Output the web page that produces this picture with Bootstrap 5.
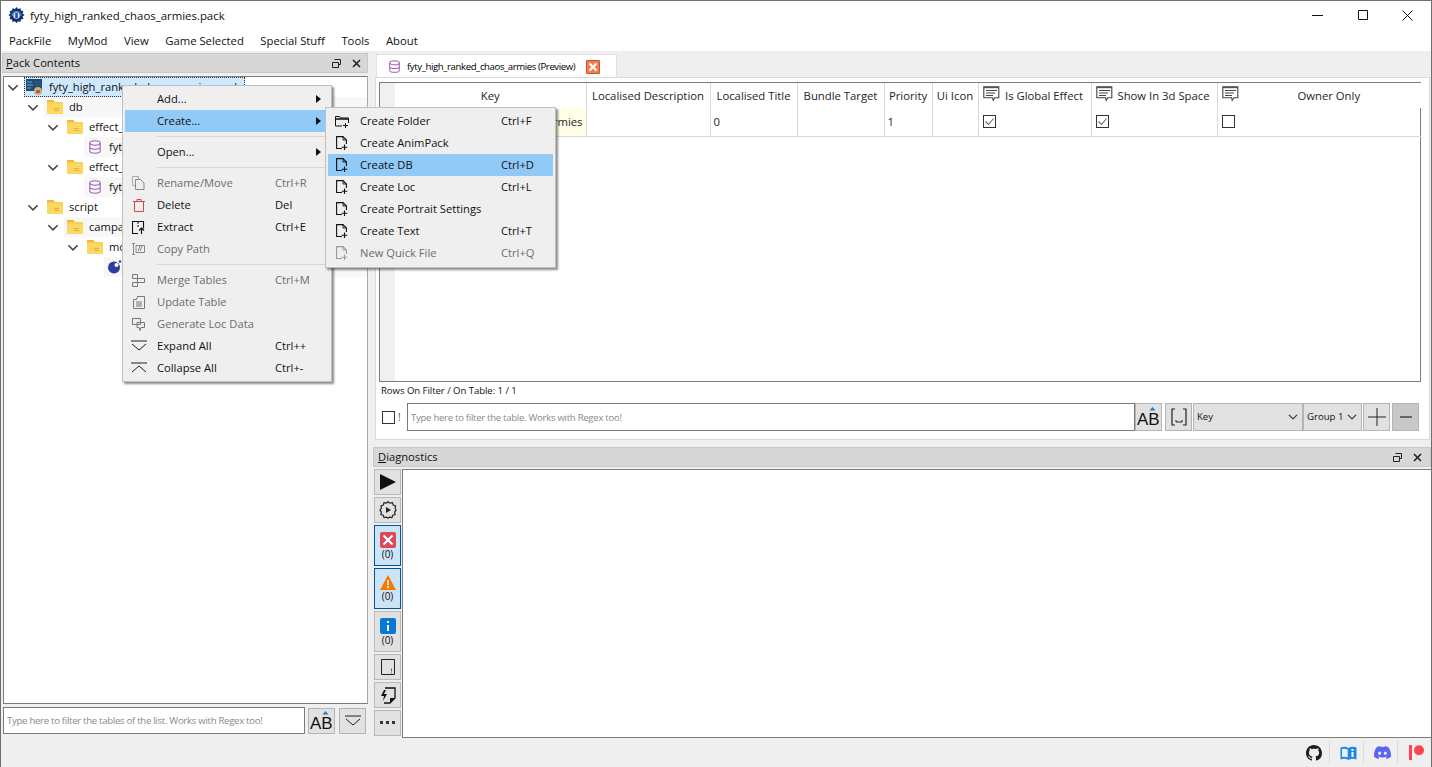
<!DOCTYPE html>
<html lang="en">
<head>
<meta charset="UTF-8" />
<title>fyty_high_ranked_chaos_armies.pack</title>
<link href="https://cdn.jsdelivr.net/npm/bootstrap@5.3.0/dist/css/bootstrap.min.css" rel="stylesheet" />
<style>
  html, body { height: 100%; }
  body { font: 11.2px/16px "Open Sans", "Noto Sans", sans-serif; color: #111; background: #efefef; border: 1px solid #6f6f6f; border-bottom: 0; overflow: hidden; position: relative; }
  svg { display: block; flex: none; }
  .titlebar { height: 29px; background: #fff; padding-left: 7px; gap: 5px; font-size: 11.4px; }
  .titlebar .name { white-space: nowrap; }
  .win-btn { width: 45px; height: 29px; justify-content: center; }
  .win-btns { margin-left: auto; padding-right: 1px; }
  .menubar { height: 21px; background: #fff; padding: 0 0 0 8px; gap: 16.500px; flex-wrap: nowrap; justify-content: flex-start; font-size: 11.3px; }
  .menubar a { color: #111; text-decoration: none; }

  .workspace { flex: 1 1 0; min-height: 0; }
  .left-pane { width: 372px; padding: 2px 5px 4px 2px; }
  .right-pane { flex: 1 1 0; min-width: 0; padding: 3px 0 0 0; }
  .dock-title { height: 20px; background: #d7d7d7; border: 1px solid #c8c8c8; padding: 0 6px 0 3px; }
  .left-pane .dock-title { margin-left: -1px; }
  .diag .dock-title { padding: 0 8px 0 4px; }
  .dock-tools { margin-left: auto; gap: 11px; }

  .tree { flex: 1 1 0; margin-top: 3px; background: #fff; border: 1px solid #7a7a7a; border-right-color: #a8a8a8; min-height: 0; overflow: hidden; }
  .tree-row { height: 20px; border: 0; padding: 0; background: none; gap: 4px; color: #111; }
  .tree-row .body { flex: 1 1 0; height: 20px; gap: 6px; padding-left: 3px; white-space: nowrap; overflow: hidden; }
  .tree-row:nth-child(even) .body { background: #f7f7f7; }
  .lvl-0 { padding-left: 2px; } .lvl-1 { padding-left: 22px; } .lvl-2 { padding-left: 42px; }
  .lvl-3 { padding-left: 62px; } .lvl-4 { padding-left: 82px; }
  .tree-row .chev, .tree-row .chev-none { width: 14px; }
  .tree-row.selected .body { flex: 0 0 221px; padding-left: 2px; gap: 7px; background: #cde8ff; outline: 1px dotted #333; outline-offset: -1px; }

  .filter-row { margin-top: 3px; height: 27px; align-items: center; margin-right: 2px; }
  .form-control.qt-input { height: 27px; border-radius: 0; border: 1px solid #7a7a7a; padding: 0 3px; font-size: 9.6px; letter-spacing: -.29px; min-height: 0; background: #fff; color: #111; box-shadow: none; }
  .qt-input::placeholder { color: #8a8a8a; opacity: 1; }
  .btn.qt-btn { width: 27px; height: 26px; padding: 0; border: 1px solid #b4b4b4; border-radius: 0; background: #e1e1e1; display: flex; align-items: center; justify-content: center; flex: none; }
  .filter-row .btn.qt-btn { margin-left: 3px; }
  .filter-row .btn.qt-btn + .btn.qt-btn { margin-left: 4px; }

  .tabs { height: 23px; border: 0; padding-left: 3px; flex-wrap: nowrap; }
  .tabs .nav-link { height: 24px; width: 241px; padding: 0 0 0 11px; gap: 6px; display: flex; align-items: center; color: #111; background: #fff; border: 1px solid #d9d9d9; border-bottom: 0; border-radius: 0; font-size: 9.6px; letter-spacing: -.4px; white-space: nowrap; }
  .tabs .tab-close { margin-left: 5px; }
  .tab-panel { height: 363px; margin-left: 2px; margin-right: 1px; background: #fff; border: 1px solid #d9d9d9; padding: 4px 8px 0 3px; }
  .grid-box { height: 300px; border: 1px solid #7d7d7d; position: relative; background: linear-gradient(90deg, #f0f0f0 15px, #fff 15px); }
  .grid { table-layout: fixed; width: 1026px; margin: 0 0 0 15px; border-collapse: collapse; --bs-table-bg: transparent; font-size: 11.3px; }
  .grid th, .grid td { border: 0; border-right: 1px solid #d9d9d9; padding: 0 3px; font-weight: 400; white-space: nowrap; overflow: hidden; vertical-align: middle; box-shadow: none; }
  .grid th { height: 25px; text-align: center; background: #fff; }
  .grid td { height: 28px; border-bottom: 1px solid #d9d9d9; }
  .grid td.key { text-align: right; background: #fffde6; }
  .grid th.has-note { position: relative; padding-left: 22px; }
  .grid th.has-note svg { position: absolute; left: 4px; top: 3px; }
  .grid th:last-child, .grid td:last-child { border-right: 0; }
  .c-key { width: 191px; } .c-desc { width: 124px; } .c-title { width: 87px; } .c-bundle { width: 87px; }
  .c-prio { width: 48px; } .c-icon { width: 46px; } .c-global { width: 113px; } .c-3d { width: 126px; } .c-owner { width: 204px; }
  .check { width: 13px; height: 13px; border: 1px solid #333; background: #fff; margin-left: 1px; }
  .status-line { height: 21px; font-size: 9.6px; letter-spacing: -.06px; padding: 1px 0 0 2px; align-items: flex-start; }
  .table-filter { height: 28px; gap: 0; align-items: center; padding-left: 3px; }
  .table-filter .check { margin: 0 3px 0 0; }
  .table-filter .bang { width: 9px; color: #555; font-size: 10px; }
  .table-filter .qt-input { flex: 1 1 0; width: auto; height: 28px; }
  .table-filter .btn.qt-btn { height: 28px; }
  .table-filter .btn.brackets { margin-left: 3px; margin-right: 1px; }
  .form-select.qt-select { height: 28px; border-radius: 0; border: 1px solid #b4b4b4; background-color: #e1e1e1; font-size: 9.6px; padding: 0 14px 0 3px; background-position: right 4px center; background-size: 10px; flex: none; color: #111; box-shadow: none; }
  .sel-key { width: 110px; } .sel-group { width: 59px; }
  .btn.qt-btn.gap-left { margin-left: 1px; width: 27px; }
  .btn.qt-btn.minus { margin-left: 2px; background: #c8c8c8; margin-right: 2px; }

  .diag { flex: 1 1 0; min-height: 0; margin-top: 7px; }
  .diag-body { flex: 1 1 0; min-height: 0; padding-top: 2px; }
  .diag-tools { width: 29px; gap: 2px; padding-left: 1px; }
  .btn.tool { width: 27px; height: 26px; padding: 0; border: 1px solid #b9b9b9; border-radius: 0; background: #e1e1e1; display: flex; flex-direction: column; align-items: center; justify-content: center; color: #111; font-size: 10px; line-height: 11px; }
  .btn.tool.tall { height: 41px; gap: 1px; }
  .btn.tool.on { background: #cce4f7; border-color: #005499; }
  .diag-list { flex: 1 1 0; background: #fff; border: 1px solid #7d7d7d; border-right: 0; }

  .statusbar { height: 29px; background: #efefef; justify-content: flex-end; }
  .statusbar .st { width: 34px; height: 23px; padding-left: 4px; display: flex; align-items: center; justify-content: center; border-left: 1px solid #dcdcdc; }
  .statusbar .st:first-child { border-left: 0; }

  .ctx.dropdown-menu { display: block; position: absolute; margin: 0; padding: 2px; min-width: 0; border: 1px solid #c0c0c0; border-radius: 0; background: #efefef; box-shadow: 2px 2px 2px rgba(0,0,0,.45); font-size: 11.2px; z-index: 10; }
  .ctx-main { left: 121px; top: 84px; width: 210px; height: 297px; }
  .ctx-sub { left: 324px; top: 106px; width: 231px; height: 161px; padding-right: 3px; z-index: 11; }
  .ctx .dropdown-item { height: 22px; padding: 0; display: flex; align-items: center; color: #111; position: relative; background: none; white-space: nowrap; font-size: 11.2px; }
  .ctx .dropdown-item.active { background: #91c9f7; color: #111; }
  .ctx .dropdown-item.disabled { color: #6d6d6d; }
  .ctx .mi { width: 32px; display: flex; justify-content: center; flex: none; padding-right: 5px; }
  .ctx .label { flex: 0 0 118px; }
  .ctx-sub .label { flex: 0 0 141px; }
  .ctx .caret { position: absolute; right: 8px; top: 7px; width: 0; height: 0; border-left: 5px solid #111; border-top: 4px solid transparent; border-bottom: 4px solid transparent; }
  .ctx .dropdown-divider { margin: 4px 0 4px 32px; opacity: 1; border-top: 1px solid #d6d6d6; }
</style>
</head>
<body class="d-flex flex-column">
<svg width="0" height="0" class="position-absolute">
  <symbol id="folder" viewBox="0 0 16 16"><path d="M0 1h6l2 2h8v12H0z" fill="#f8d258"/><path d="M0 1h6l2 2H0z" fill="#f2b632"/><path d="M0 5h16v10H0z" fill="#fbd862"/><path d="M7 9h5v1H7zM7 11h5v1H7z" fill="#eaa93c"/></symbol>
  <symbol id="db" viewBox="0 0 14 14"><g fill="none" stroke="#a45fb8" stroke-width="1.1"><ellipse cx="7" cy="3" rx="5.2" ry="2.2"/><path d="M1.800 3v8c0 1.200 2.300 2.200 5.200 2.200s5.200-1 5.200-2.200V3M1.800 7c0 1.200 2.300 2.200 5.200 2.200s5.200-1 5.200-2.200"/></g></symbol>
  <symbol id="chev" viewBox="0 0 10 6"><path d="M1 1l4 4 4-4" fill="none" stroke="#444" stroke-width="1.3"/></symbol>
  <symbol id="docplus" viewBox="0 0 12 14"><path d="M6 12.500H.6V.6h6.400L10.400 4v4" fill="none" stroke="currentColor" stroke-width="1.100"/><path d="M7 .6V4h3.400" fill="none" stroke="currentColor" stroke-width=".9"/><path d="M8.500 8.500v5.500M5.800 11.200h5.500" stroke="currentColor" stroke-width="1.100"/></symbol>
  <symbol id="note" viewBox="0 0 17 16"><path d="M.8.800h15v11h-4l-1.600 2.500-.6-2.500H.8z" fill="#fff" stroke="#444" stroke-width="1.100"/><path d="M.8.800h15v1.400H.8z" fill="#555"/><path d="M3 4.500h11M3 7h9M3 9.500h7" stroke="#444"/></symbol>
  <symbol id="ab" viewBox="0 0 24 20"><path d="M15.500 0l3 3.500h-6z" fill="#1a7fd6"/><text x="0" y="18" font-family="Liberation Sans, sans-serif" font-size="17" fill="#111">AB</text></symbol>
  <symbol id="expand" viewBox="0 0 16 12"><path d="M0 1h16" stroke="#222"/><path d="M1 4l7 6 7-6" fill="none" stroke="#222"/></symbol>
  <symbol id="collapse" viewBox="0 0 16 12"><path d="M0 1h16" stroke="#222"/><path d="M1 10l7-6 7 6" fill="none" stroke="#222"/></symbol>
</svg>

<header class="titlebar d-flex align-items-center">
  <svg width="17" height="17" viewBox="0 0 17 17"><path d="M8.500 0l1.500 2 2.400-.8.600 2.400 2.400.6-.8 2.400 2 1.500-2 1.500.8 2.400-2.400.6-.6 2.400-2.400-.8-1.500 2-1.500-2-2.400.8-.6-2.400-2.400-.6.8-2.400-2-1.500 2-1.500-.8-2.400 2.400-.6.6-2.400 2.400.8z" fill="#16306f"/><path d="M4 9a4.500 4.500 0 019 0" fill="none" stroke="#4d8fd6" stroke-width="1.200"/><circle cx="8.500" cy="8.500" r="3.200" fill="#e6edf7"/><path d="M7.200 6h2.600v5H7.200z" fill="#1d4f9f"/></svg>
  <span class="name">fyty_high_ranked_chaos_armies.pack</span>
  <div class="win-btns d-flex">
    <div class="win-btn d-flex align-items-center"><svg width="11" height="11" viewBox="0 0 11 11"><path d="M0 5.500h11" stroke="#111"/></svg></div>
    <div class="win-btn d-flex align-items-center"><svg width="11" height="11" viewBox="0 0 11 11"><path d="M1.500.500h9v9h-9z" fill="none" stroke="#111"/></svg></div>
    <div class="win-btn d-flex align-items-center"><svg width="11" height="11" viewBox="0 0 11 11"><path d="M.5.500l10 10M10.500.500l-10 10" stroke="#111"/></svg></div>
  </div>
</header>

<nav class="navbar menubar">
  <a href="#">PackFile</a><a href="#">MyMod</a><a href="#">View</a><a href="#">Game Selected</a><a href="#">Special Stuff</a><a href="#">Tools</a><a href="#">About</a>
</nav>

<main class="workspace d-flex">
  <section class="left-pane d-flex flex-column">
    <div class="dock-title d-flex align-items-center">
      <span><u>P</u>ack Contents</span>
      <div class="dock-tools d-flex align-items-center">
        <svg width="9" height="9" viewBox="0 0 9 9"><path d="M2.500.5h6v5h-2M.5 3.500h6v5h-6z" fill="none" stroke="#222"/></svg>
        <svg width="9" height="9" viewBox="0 0 9 9"><path d="M1 1l7 7M8 1L1 8" stroke="#222" stroke-width="1.600"/></svg>
      </div>
    </div>
    <div class="tree list-group list-group-flush">
      <div class="list-group-item tree-row selected lvl-0 d-flex align-items-center">
        <svg class="chev" width="14" height="7"><use href="#chev"/></svg>
        <div class="body d-flex align-items-center">
          <svg width="16" height="16" viewBox="0 0 16 16"><rect y="0" width="16" height="12" fill="#1f4a72"/><path d="M1 3h5M1 6h6M1 9h4" stroke="#6fa8d8"/><path d="M8 3h7M9 6h6" stroke="#35658f"/><circle cx="12" cy="12" r="4" fill="#c9b46a"/><rect x="10.200" y="11" width="3.600" height="3" fill="#b5505e"/></svg>
          <span>fyty_high_ranked_chaos_armies.pack</span>
        </div>
      </div>
      <div class="list-group-item tree-row lvl-1 d-flex align-items-center"><svg class="chev" width="14" height="7"><use href="#chev"/></svg><div class="body d-flex align-items-center"><svg width="16" height="16"><use href="#folder"/></svg><span>db</span></div></div>
      <div class="list-group-item tree-row lvl-2 d-flex align-items-center"><svg class="chev" width="14" height="7"><use href="#chev"/></svg><div class="body d-flex align-items-center"><svg width="16" height="16"><use href="#folder"/></svg><span>effect_bundles_tables</span></div></div>
      <div class="list-group-item tree-row lvl-3 d-flex align-items-center"><span class="chev-none"></span><div class="body d-flex align-items-center"><svg width="16" height="14" viewBox="-1 0 16 14"><use href="#db" width="14" height="14"/></svg><span>fyty_high_ranked_chaos_armies</span></div></div>
      <div class="list-group-item tree-row lvl-2 d-flex align-items-center"><svg class="chev" width="14" height="7"><use href="#chev"/></svg><div class="body d-flex align-items-center"><svg width="16" height="16"><use href="#folder"/></svg><span>effect_bundles_to_tables</span></div></div>
      <div class="list-group-item tree-row lvl-3 d-flex align-items-center"><span class="chev-none"></span><div class="body d-flex align-items-center"><svg width="16" height="14" viewBox="-1 0 16 14"><use href="#db" width="14" height="14"/></svg><span>fyty_high_ranked_chaos_armies</span></div></div>
      <div class="list-group-item tree-row lvl-1 d-flex align-items-center"><svg class="chev" width="14" height="7"><use href="#chev"/></svg><div class="body d-flex align-items-center"><svg width="16" height="16"><use href="#folder"/></svg><span>script</span></div></div>
      <div class="list-group-item tree-row lvl-2 d-flex align-items-center"><svg class="chev" width="14" height="7"><use href="#chev"/></svg><div class="body d-flex align-items-center"><svg width="16" height="16"><use href="#folder"/></svg><span>campaign</span></div></div>
      <div class="list-group-item tree-row lvl-3 d-flex align-items-center"><svg class="chev" width="14" height="7"><use href="#chev"/></svg><div class="body d-flex align-items-center"><svg width="16" height="16"><use href="#folder"/></svg><span>mod</span></div></div>
      <div class="list-group-item tree-row lvl-4 d-flex align-items-center"><span class="chev-none"></span><div class="body d-flex align-items-center"><svg width="16" height="14" viewBox="0 0 16 14"><circle cx="7" cy="7.500" r="6" fill="#2a3f9e"/><circle cx="9.500" cy="5" r="2" fill="#fff"/><circle cx="13" cy="1.500" r="1.200" fill="#2a3f9e"/></svg><span>fyty_high_ranked_chaos_armies.lua</span></div></div>
    </div>
    <div class="filter-row d-flex">
      <input class="form-control qt-input" placeholder="Type here to filter the tables of the list. Works with Regex too!" />
      <button class="btn qt-btn"><svg width="24" height="20"><use href="#ab"/></svg></button>
      <button class="btn qt-btn"><svg width="16" height="12"><use href="#expand"/></svg></button>
    </div>
  </section>

  <section class="right-pane d-flex flex-column">
    <ul class="nav nav-tabs tabs">
      <li class="nav-item">
        <a class="nav-link active" href="#">
          <svg width="13" height="13"><use href="#db"/></svg>
          <span>fyty_high_ranked_chaos_armies (Preview)</span>
          <svg class="tab-close" width="14" height="14" viewBox="0 0 14 14"><rect width="14" height="14" rx="1" fill="#ef7f52"/><rect x=".5" y=".5" width="13" height="13" rx="1" fill="none" stroke="#c9542a"/><path d="M3.500 3.500l7 7M10.500 3.500l-7 7" stroke="#fff" stroke-width="2"/></svg>
        </a>
      </li>
    </ul>
    <div class="tab-panel">
      <div class="grid-box">
        <table class="table grid mb-0">
          <colgroup><col class="c-key"><col class="c-desc"><col class="c-title"><col class="c-bundle"><col class="c-prio"><col class="c-icon"><col class="c-global"><col class="c-3d"><col class="c-owner"></colgroup>
          <thead>
            <tr>
              <th>Key</th><th>Localised Description</th><th>Localised Title</th><th>Bundle Target</th><th>Priority</th><th>Ui Icon</th>
              <th class="has-note"><svg width="17" height="16"><use href="#note"/></svg>Is Global Effect</th>
              <th class="has-note"><svg width="17" height="16"><use href="#note"/></svg>Show In 3d Space</th>
              <th class="has-note"><svg width="17" height="16"><use href="#note"/></svg>Owner Only</th>
            </tr>
          </thead>
          <tbody>
            <tr>
              <td class="key">fyty_high_ranked_chaos_armies</td><td></td><td>0</td><td></td><td>1</td><td></td>
              <td><div class="check"><svg width="11" height="11" viewBox="0 0 11 11"><path d="M1.500 5.500l3 3 5-6" fill="none" stroke="#666" stroke-width="1.100"/></svg></div></td>
              <td><div class="check"><svg width="11" height="11" viewBox="0 0 11 11"><path d="M1.500 5.500l3 3 5-6" fill="none" stroke="#666" stroke-width="1.100"/></svg></div></td>
              <td><div class="check"></div></td>
            </tr>
          </tbody>
        </table>
      </div>
      <div class="status-line d-flex">Rows On Filter / On Table: 1 / 1</div>
      <div class="table-filter d-flex">
        <div class="check"></div><span class="bang">!</span>
        <input class="form-control qt-input" placeholder="Type here to filter the table. Works with Regex too!" />
        <button class="btn qt-btn"><svg width="24" height="20"><use href="#ab"/></svg></button>
        <button class="btn qt-btn brackets"><svg width="20" height="18" viewBox="0 0 20 18"><path d="M6 1H3v16h3M14 1h3v16h-3" fill="none" stroke="#222" stroke-width="1.200"/><path d="M7 12v2h6v-2" fill="none" stroke="#222"/></svg></button>
        <select class="form-select qt-select sel-key"><option>Key</option></select>
        <select class="form-select qt-select sel-group"><option>Group 1</option></select>
        <button class="btn qt-btn gap-left"><svg width="18" height="18" viewBox="0 0 18 18"><path d="M9 0v18M0 9h18" stroke="#222"/></svg></button>
        <button class="btn qt-btn minus"><svg width="12" height="2" viewBox="0 0 12 2"><path d="M0 1h12" stroke="#666" stroke-width="2"/></svg></button>
      </div>
    </div>

    <div class="diag d-flex flex-column">
      <div class="dock-title d-flex align-items-center">
        <span><u>D</u>iagnostics</span>
        <div class="dock-tools d-flex align-items-center">
          <svg width="9" height="9" viewBox="0 0 9 9"><path d="M2.500.5h6v5h-2M.5 3.500h6v5h-6z" fill="none" stroke="#222"/></svg>
          <svg width="9" height="9" viewBox="0 0 9 9"><path d="M1 1l7 7M8 1L1 8" stroke="#222" stroke-width="1.600"/></svg>
        </div>
      </div>
      <div class="diag-body d-flex">
        <div class="diag-tools d-flex flex-column">
          <button class="btn tool"><svg width="16" height="16" viewBox="0 0 16 16"><path d="M0 0l16 8-16 8z" fill="#111"/></svg></button>
          <button class="btn tool"><svg width="18" height="18" viewBox="0 0 18 18"><path d="M9 1l2 1.500 2.500-.5.700 2.400 2.400.7-.5 2.400L17 9.500l-1.400 2 .5 2.400-2.400.6-.7 2.400-2.500-.5L9 17.500l-1.500-1.100-2.500.5-.7-2.400-2.400-.6.500-2.400L1 9.500l1.400-2-.5-2.400 2.400-.7.700-2.400 2.500.5z" transform="translate(0 -.3)" fill="none" stroke="#222" stroke-width="1.200"/><path d="M7 6l5 3-5 3z" fill="#222"/></svg></button>
          <button class="btn tool tall on"><svg width="16" height="16" viewBox="0 0 16 16"><rect width="16" height="16" rx="2" fill="#e0475a"/><path d="M3.500 3.500l9 9M12.500 3.500l-9 9" stroke="#fff" stroke-width="2.200"/></svg><span>(0)</span></button>
          <button class="btn tool tall on"><svg width="16" height="15" viewBox="0 0 16 15"><path d="M8 0l8 15H0z" fill="#f57800"/><path d="M7.200 5h1.600v5H7.200zM7.200 11h1.600v2H7.200z" fill="#fff"/></svg><span>(0)</span></button>
          <button class="btn tool tall"><svg width="16" height="16" viewBox="0 0 16 16"><rect width="16" height="16" rx="2" fill="#0a78d7"/><path d="M7 3h2v2H7zM7 7h2v6H7z" fill="#fff"/></svg><span>(0)</span></button>
          <button class="btn tool"><svg width="14" height="16" viewBox="0 0 14 16"><path d="M.5.500h13v15H.5z" fill="none" stroke="#222"/><path d="M10.500 9.500v3M10.500 13.500v1" stroke="#c0394a" stroke-width="1"/></svg></button>
          <button class="btn tool"><svg width="16" height="17" viewBox="0 0 16 17"><path d="M5 1h10v10l-5 5H4" fill="none" stroke="#111" stroke-width="1.300"/><path d="M4 3L1 9h3l-1 5 4-7H4l2-4z" fill="#111"/><path d="M10 16v-5h5z" fill="#111"/></svg></button>
          <button class="btn tool"><svg width="15" height="4" viewBox="0 0 15 4"><path d="M0 0h3v3H0zM6 0h3v3H6zM12 0h3v3h-3z" fill="#333"/></svg></button>
        </div>
        <div class="diag-list"></div>
      </div>
    </div>
  </section>
</main>

<footer class="statusbar d-flex align-items-center">
  <div class="st"><svg width="16" height="16" viewBox="0 0 16 16"><path fill="#1b1f23" d="M8 0C3.580 0 0 3.580 0 8c0 3.540 2.290 6.530 5.470 7.590.4.070.55-.17.55-.38 0-.19-.01-.82-.01-1.490-2.010.37-2.530-.49-2.690-.94-.09-.23-.48-.94-.82-1.130-.28-.15-.68-.52-.01-.53.63-.01 1.080.58 1.230.82.720 1.210 1.870.87 2.330.66.070-.52.280-.87.510-1.070-1.780-.2-3.640-.89-3.640-3.950 0-.87.310-1.590.820-2.150-.08-.2-.36-1.020.080-2.120 0 0 .67-.21 2.200.82.640-.18 1.320-.27 2-.27.680 0 1.360.09 2 .27 1.530-1.040 2.200-.82 2.200-.82.440 1.100.160 1.920.080 2.120.510.560.820 1.270.820 2.150 0 3.070-1.870 3.750-3.650 3.950.290.250.540.730.540 1.480 0 1.070-.01 1.930-.01 2.200 0 .21.150.46.550.38A8.013 8.013 0 0016 8c0-4.420-3.580-8-8-8z"/></svg></div>
  <div class="st"><svg width="17" height="14" viewBox="0 0 17 14"><path d="M.5 1.500C3 .5 6 .5 8.500 2c2.500-1.500 5.500-1.500 8-.5v12c-2.500-1-5.500-1-8 .5-2.500-1.500-5.500-1.500-8-.5z" fill="#1e88e5"/><path d="M2 3c2-.5 4-.3 5.700.5v8C6 10.700 4 10.500 2 11z" fill="#fff" opacity=".9"/><path d="M11.500 3h2v2h-2zM11.500 6h2v5h-2z" fill="#fff"/></svg></div>
  <div class="st"><svg width="17" height="13" viewBox="0 0 127.140 96.360"><path fill="#5865f2" d="M107.700,8.070A105.150,105.150,0,0,0,81.470,0a72.060,72.060,0,0,0-3.360,6.830A97.680,97.680,0,0,0,49,6.830,72.370,72.370,0,0,0,45.640,0,105.890,105.890,0,0,0,19.390,8.090C2.790,32.650-1.710,56.600.54,80.210h0A105.730,105.730,0,0,0,32.710,96.360,77.700,77.700,0,0,0,39.600,85.250a68.420,68.420,0,0,1-10.850-5.180c.91-.66,1.800-1.340,2.660-2a75.570,75.570,0,0,0,64.320,0c.87.710,1.760,1.390,2.660,2a68.680,68.680,0,0,1-10.870,5.190,77,77,0,0,0,6.890,11.100A105.250,105.250,0,0,0,126.600,80.220h0C129.240,52.840,122.090,29.110,107.700,8.070ZM42.450,65.690C36.180,65.690,31,60,31,53s5-12.740,11.430-12.740S54,46,53.890,53,48.840,65.690,42.450,65.690Zm42.240,0C78.410,65.690,73.250,60,73.250,53s5-12.740,11.440-12.740S96.230,46,96.120,53,91.080,65.690,84.690,65.690Z"/></svg></div>
  <div class="st"><svg width="15" height="15" viewBox="0 0 15 15"><rect x="0" y="0" width="3" height="15" fill="#ff424d"/><circle cx="10" cy="5.200" r="5" fill="#ff424d"/></svg></div>
</footer>

<!-- open context menus -->
<div class="dropdown-menu ctx ctx-main show">
  <a class="dropdown-item"><span class="mi"></span><span class="label">Add...</span><i class="caret"></i></a>
  <a class="dropdown-item active"><span class="mi"></span><span class="label">Create...</span><i class="caret"></i></a>
  <hr class="dropdown-divider">
  <a class="dropdown-item"><span class="mi"></span><span class="label">Open...</span><i class="caret"></i></a>
  <hr class="dropdown-divider">
  <a class="dropdown-item disabled"><span class="mi"><svg width="13" height="14" viewBox="0 0 13 14"><path d="M.5.500h6v3M.5.500v9h3" fill="none" stroke="#aaa"/><path d="M3.500 3.500h5l3.500 3.500v6.500H3.500z" fill="#efefef" stroke="#888"/></svg></span><span class="label">Rename/Move</span><span>Ctrl+R</span></a>
  <a class="dropdown-item"><span class="mi"><svg width="12" height="13" viewBox="0 0 12 13"><path d="M0 2.500h12M4 2.500V.5h4v2M1.500 2.500h9v10h-9z" fill="none" stroke="#d8404f"/></svg></span><span class="label">Delete</span><span>Del</span></a>
  <a class="dropdown-item"><span class="mi"><svg width="13" height="13" viewBox="0 0 13 13"><path d="M6 12.500H.5V.5h11v7" fill="none" stroke="#111" stroke-width="1.100"/><path d="M6 1v2M6 4v2" stroke="#111"/><path d="M9.500 13V7M7 9.500L9.500 7 12 9.500" fill="none" stroke="#111" stroke-width="1.200"/></svg></span><span class="label">Extract</span><span>Ctrl+E</span></a>
  <a class="dropdown-item disabled"><span class="mi"><svg width="13" height="12" viewBox="0 0 13 12"><path d="M0 .5h3M0 11.500h3M1.500.5v11M4 2.500h8.500v7H4z" fill="none" stroke="#888"/><path d="M6 8l2-5M8 8l2-5" stroke="#888"/></svg></span><span class="label">Copy Path</span></a>
  <hr class="dropdown-divider">
  <a class="dropdown-item disabled"><span class="mi"><svg width="13" height="13" viewBox="0 0 13 13"><path d="M.5.500h5v4h-5zM.5 8.500h5v4h-5zM5.500 4.500h7v4h-7z" fill="none" stroke="#777"/></svg></span><span class="label">Merge Tables</span><span>Ctrl+M</span></a>
  <a class="dropdown-item disabled"><span class="mi"><svg width="12" height="13" viewBox="0 0 12 13"><path d="M.5 3.500h3l1-3h7v12H.5zM3 6h6M3 8h6M3 10h6" fill="none" stroke="#777"/></svg></span><span class="label">Update Table</span></a>
  <a class="dropdown-item disabled"><span class="mi"><svg width="13" height="13" viewBox="0 0 13 13"><path d="M.5.500h8v6h-8zM5 4.500h7.500v5H9l-1 3-1-3H5z" fill="none" stroke="#777"/></svg></span><span class="label">Generate Loc Data</span></a>
  <a class="dropdown-item"><span class="mi"><svg width="16" height="12"><use href="#expand"/></svg></span><span class="label">Expand All</span><span>Ctrl++</span></a>
  <a class="dropdown-item"><span class="mi"><svg width="16" height="12"><use href="#collapse"/></svg></span><span class="label">Collapse All</span><span>Ctrl+-</span></a>
</div>
<div class="dropdown-menu ctx ctx-sub show">
  <a class="dropdown-item"><span class="mi"><svg width="14" height="13" viewBox="0 0 14 13"><path d="M7 11H.5V1.500h4l1 1.500h8v5" fill="none" stroke="#111"/><path d="M.5 4h13" stroke="#111" stroke-width="1.500"/><path d="M10.500 8v5M8 10.500h5" stroke="#111"/></svg></span><span class="label">Create Folder</span><span>Ctrl+F</span></a>
  <a class="dropdown-item"><span class="mi"><svg width="12" height="14"><use href="#docplus"/></svg></span><span class="label">Create AnimPack</span></a>
  <a class="dropdown-item active"><span class="mi"><svg width="12" height="14"><use href="#docplus"/></svg></span><span class="label">Create DB</span><span>Ctrl+D</span></a>
  <a class="dropdown-item"><span class="mi"><svg width="12" height="14"><use href="#docplus"/></svg></span><span class="label">Create Loc</span><span>Ctrl+L</span></a>
  <a class="dropdown-item"><span class="mi"><svg width="12" height="14"><use href="#docplus"/></svg></span><span class="label">Create Portrait Settings</span></a>
  <a class="dropdown-item"><span class="mi"><svg width="12" height="14"><use href="#docplus"/></svg></span><span class="label">Create Text</span><span>Ctrl+T</span></a>
  <a class="dropdown-item disabled"><span class="mi"><svg width="12" height="14" color="#999"><use href="#docplus"/></svg></span><span class="label">New Quick File</span><span>Ctrl+Q</span></a>
</div>
<script src="https://cdn.jsdelivr.net/npm/bootstrap@5.3.0/dist/js/bootstrap.bundle.min.js"></script>
</body>
</html>
